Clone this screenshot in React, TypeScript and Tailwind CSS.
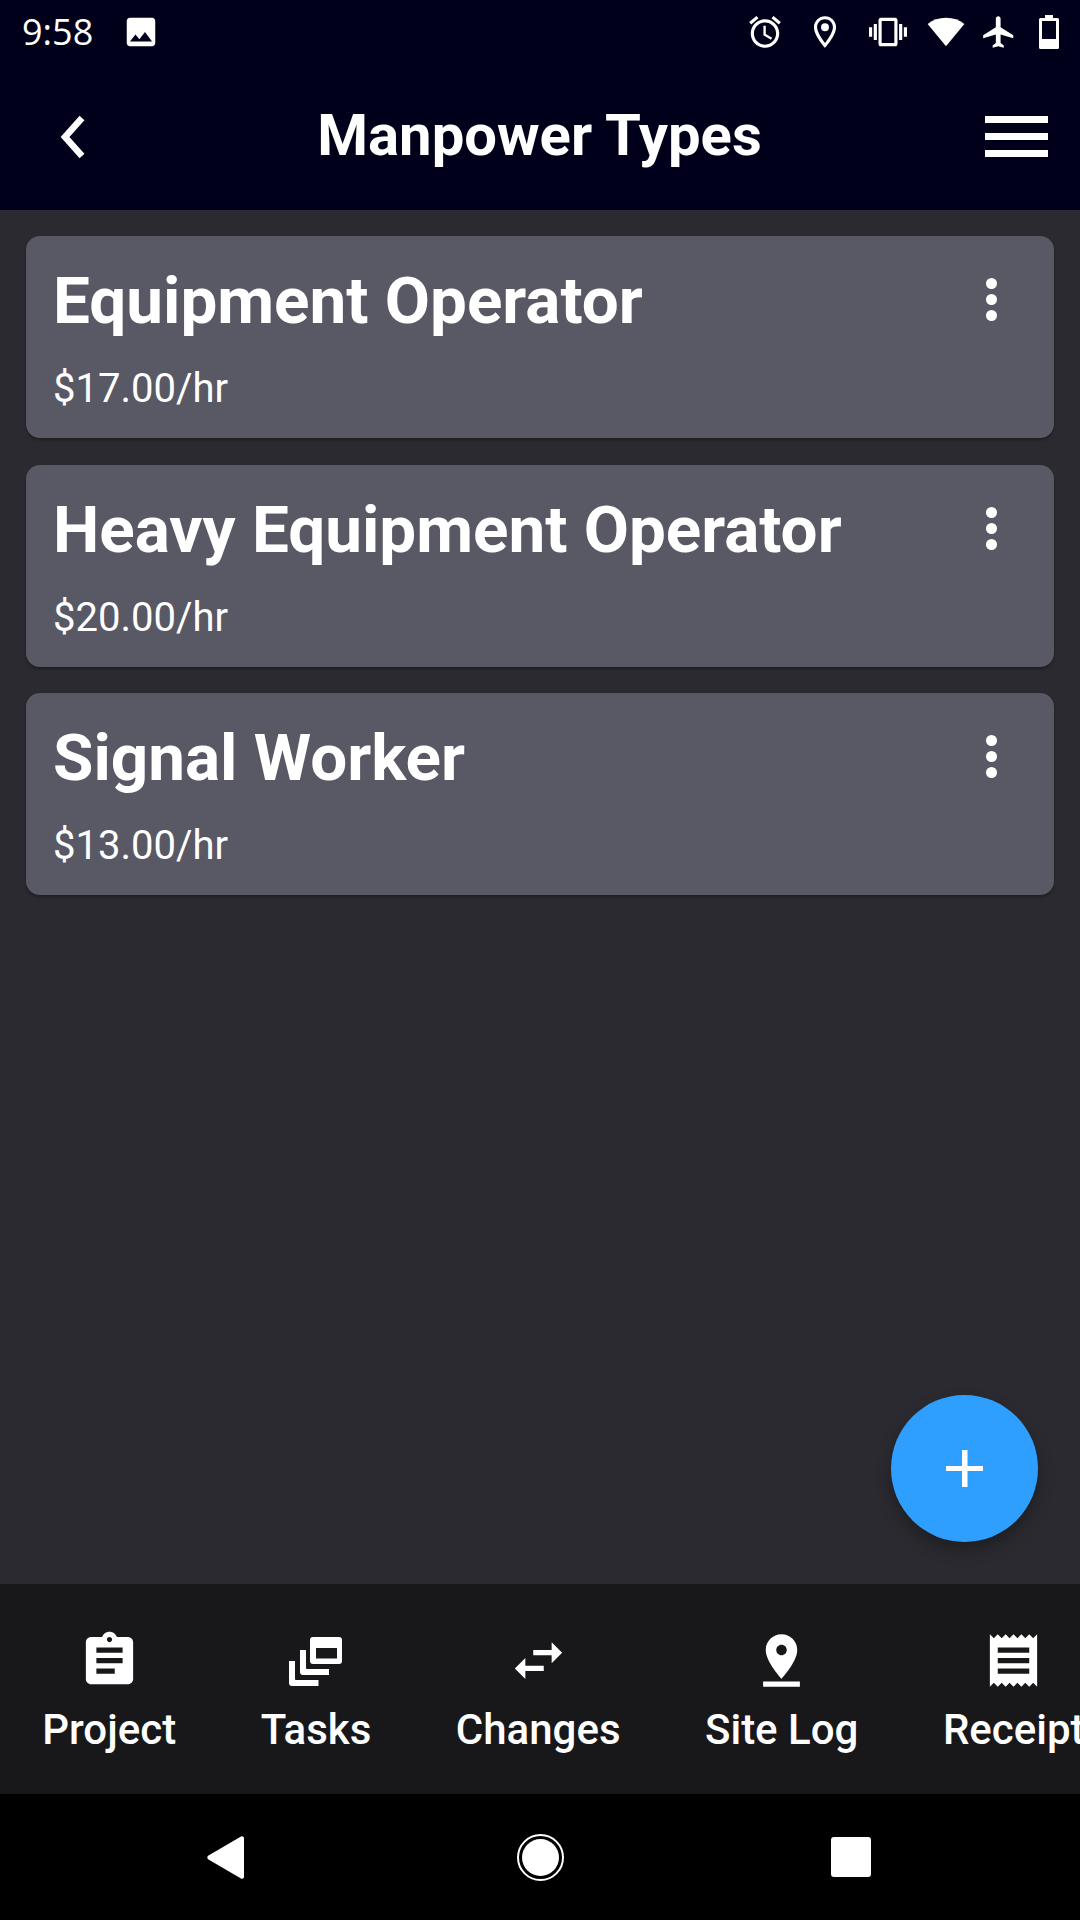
import * as React from "react";

const manpowerTypes = [
  { name: "Equipment Operator", rate: "$17.00/hr" },
  { name: "Heavy Equipment Operator", rate: "$20.00/hr" },
  { name: "Signal Worker", rate: "$13.00/hr" },
];

function Icon({ d, className }: { d: string; className: string }) {
  return (
    <svg viewBox="0 0 24 24" fill="currentColor" className={className}>
      <path d={d} />
    </svg>
  );
}

const ICONS = {
  image:
    "M21 19V5c0-1.1-.9-2-2-2H5c-1.1 0-2 .9-2 2v14c0 1.1.9 2 2 2h14c1.1 0 2-.9 2-2zM8.5 13.5l2.5 3.01L14.5 12l4.5 6H5l3.5-4.5z",
  alarm:
    "M22 5.72l-4.6-3.86-1.29 1.53 4.6 3.86L22 5.72zM7.88 3.39L6.6 1.86 2 5.71l1.29 1.53 4.59-3.85zM12.5 8H11v6l4.75 2.85.75-1.23-4-2.37V8zM12 4c-4.97 0-9 4.03-9 9s4.03 9 9 9 9-4.03 9-9-4.03-9-9-9zm0 16c-3.87 0-7-3.13-7-7s3.13-7 7-7 7 3.13 7 7-3.13 7-7 7z",
  place:
    "M12 2C8.13 2 5 5.13 5 9c0 5.25 7 13 7 13s7-7.75 7-13c0-3.87-3.13-7-7-7zM7 9c0-2.76 2.24-5 5-5s5 2.24 5 5c0 2.88-2.88 7.19-5 9.88C9.92 16.21 7 11.85 7 9z M12 6.500a2.500 2.500 0 1 0 0 5 2.500 2.500 0 0 0 0-5z",
  vibration:
    "M0 15h2V9H0v6zm3 2h2V7H3v10zm19-8v6h2V9h-2zm-3 8h2V7h-2v10zM16.500 3h-9C6.670 3 6 3.670 6 4.500v15c0 .83.67 1.500 1.500 1.500h9c.83 0 1.500-.67 1.500-1.500v-15c0-.83-.67-1.500-1.500-1.500zM16 19H8V5h8v14z",
  wifi: "M12 21L0.400 7C3.600 4.400 7.600 3 12 3s8.400 1.400 11.600 4L12 21z",
  plane:
    "M21 16v-2l-8-5V3.500c0-.83-.67-1.500-1.500-1.500S10 2.670 10 3.500V9l-8 5v2l8-2.500V19l-2 1.500V22l3.500-1 3.500 1v-1.500L13 19v-5.500l8 2.500z",
  project:
    "M19 3h-4.180C14.400 1.840 13.300 1 12 1c-1.300 0-2.400.84-2.820 2H5c-1.100 0-2 .9-2 2v14c0 1.100.9 2 2 2h14c1.100 0 2-.9 2-2V5c0-1.100-.9-2-2-2zm-7 0c.55 0 1 .45 1 1s-.45 1-1 1-1-.45-1-1 .45-1 1-1zm2 14H7v-2h7v2zm3-4H7v-2h10v2zm0-4H7V7h10v2z",
  changes: "M6.990 11L3 15l3.990 4v-3H14v-2H6.990v-3zM21 9l-3.990-4v3H10v2h7.010v3L21 9z",
  siteLog:
    "M18 8c0-3.310-2.690-6-6-6S6 4.690 6 8c0 4.500 6 11 6 11s6-6.500 6-11zm-8 0c0-1.100.9-2 2-2s2 .9 2 2-.89 2-2 2c-1.100 0-2-.9-2-2zM5 20v2h14v-2H5z",
  receipt:
    "M18 17H6v-2h12v2zm0-4H6v-2h12v2zm0-4H6V7h12v2zM3 22l1.500-1.500L6 22l1.500-1.500L9 22l1.500-1.500L12 22l1.500-1.500L15 22l1.500-1.500L18 22l1.500-1.500L21 22V2l-1.500 1.500L18 2l-1.500 1.500L15 2l-1.500 1.500L12 2l-1.500 1.500L9 2 7.500 3.500 6 2 4.500 3.500 3 2v20z",
};

function BatteryIcon() {
  return (
    <svg viewBox="0 0 20 34" fill="currentColor" className="w-[20px] h-[34px]">
      <path
        fillRule="evenodd"
        d="M6 0h8v3h4.500A1.500 1.500 0 0 1 20 4.500v28a1.500 1.500 0 0 1-1.500 1.500h-17A1.500 1.500 0 0 1 0 32.500v-28A1.500 1.500 0 0 1 1.500 3H6zM3 6v18h14V6z"
      />
    </svg>
  );
}

function TasksIcon() {
  return (
    <svg viewBox="0 0 62 62" fill="currentColor" className="w-[62px] h-[62px]">
      <path
        fillRule="evenodd"
        d="M28 7h26a3 3 0 0 1 3 3v21a3 3 0 0 1-3 3H28a3 3 0 0 1-3-3V10a3 3 0 0 1 3-3zm3 11v10.500h21V18z"
      />
      <path d="M15 20h6v18a1 1 0 0 0 1 1h22v6H18a3 3 0 0 1-3-3z" />
      <path d="M4 31h6v18a1 1 0 0 0 1 1h22.500v6H7a3 3 0 0 1-3-3z" />
    </svg>
  );
}

function TabItem({ label, icon }: { label: string; icon: React.ReactNode }) {
  return (
    <div className="flex flex-col items-center shrink-0 px-[42.25px]">
      <div className="h-[63px] flex items-center justify-center">{icon}</div>
      <span className="text-[42px] leading-[47px] font-medium mt-[14px] whitespace-nowrap">
        {label}
      </span>
    </div>
  );
}

export default function App() {
  return (
    <div className="relative w-[1080px] h-[1920px] flex flex-col overflow-hidden bg-[#2a2a30] text-white font-['Roboto',sans-serif]">
      <header className="h-[210px] shrink-0 bg-[#00001a] flex flex-col">
        <div className="h-[63px] flex items-center pl-[22px]">
          <span className="text-[36px] leading-none w-[100px] font-medium font-['Open_Sans',sans-serif]">
            9:58
          </span>
          <Icon d={ICONS.image} className="w-[38px] h-[38px]" />
          <div className="flex-1" />
          <Icon d={ICONS.alarm} className="w-[38px] h-[38px] mr-[22px]" />
          <Icon d={ICONS.place} className="w-[38px] h-[38px] mr-[25px]" />
          <Icon d={ICONS.vibration} className="w-[38px] h-[38px] mr-[19px]" />
          <Icon d={ICONS.wifi} className="w-[40px] h-[38px] mr-[14px]" />
          <Icon d={ICONS.plane} className="w-[38px] h-[38px] mr-[21px]" />
          <BatteryIcon />
          <div className="w-[21px]" />
        </div>
        <div className="flex-1 flex items-center justify-between pl-[54px] pr-[32px]">
          <svg
            viewBox="0 0 40 50"
            className="w-[40px] h-[50px]"
            fill="none"
            stroke="currentColor"
            strokeWidth="6.500"
          >
            <path d="M28 6L11 25l17 19" />
          </svg>
          <h1 className="text-[58px] leading-none font-bold -mt-[3px]">Manpower Types</h1>
          <div className="w-[63px] flex flex-col gap-[10px]">
            <div className="h-[7px] bg-white" />
            <div className="h-[7px] bg-white" />
            <div className="h-[7px] bg-white" />
          </div>
        </div>
      </header>

      <main className="flex-1 flex flex-col gap-[26.5px] pt-[26px] px-[26px]">
        {manpowerTypes.map((t) => (
          <div
            key={t.name}
            className="h-[202px] rounded-[14px] bg-[#595965] shadow-[0_2px_3px_rgba(0,0,0,0.3)] flex justify-between pl-[27px] pr-[57px]"
          >
            <div className="flex flex-col">
              <h2 className="text-[65.6px] leading-[77px] font-bold mt-[26px]">{t.name}</h2>
              <p className="text-[40px] leading-[47px] mt-[26px]">{t.rate}</p>
            </div>
            <div className="flex flex-col gap-[5px] mt-[42px]">
              <span className="w-[11px] h-[11px] rounded-full bg-white" />
              <span className="w-[11px] h-[11px] rounded-full bg-white" />
              <span className="w-[11px] h-[11px] rounded-full bg-white" />
            </div>
          </div>
        ))}
      </main>

      <button className="absolute left-[891px] top-[1395px] w-[147px] h-[147px] rounded-full bg-[#2f9fff] shadow-[0_8px_16px_rgba(0,0,0,0.3)] flex items-center justify-center">
        <svg viewBox="0 0 37 37" className="w-[37px] h-[37px]" fill="currentColor">
          <path d="M16 0h5.500v16H37v5H21.500v16H16V21H0v-5h16z" />
        </svg>
      </button>

      <nav className="h-[210px] shrink-0 bg-[#18181b] flex overflow-hidden pt-[45px]">
        <TabItem label="Project" icon={<Icon d={ICONS.project} className="w-[63px] h-[63px]" />} />
        <TabItem label="Tasks" icon={<TasksIcon />} />
        <TabItem label="Changes" icon={<Icon d={ICONS.changes} className="w-[63px] h-[63px]" />} />
        <TabItem label="Site Log" icon={<Icon d={ICONS.siteLog} className="w-[63px] h-[63px]" />} />
        <TabItem label="Receipt" icon={<Icon d={ICONS.receipt} className="w-[63px] h-[63px]" />} />
      </nav>

      <footer className="h-[126px] shrink-0 bg-black flex items-center pl-[207px]">
        <svg viewBox="0 0 37 43" className="w-[37px] h-[43px]" fill="currentColor">
          <path d="M34 .6a2 2 0 0 1 3 1.700v38.400a2 2 0 0 1-3 1.700L1.500 23.500a2.300 2.300 0 0 1 0-4z" />
        </svg>
        <div className="ml-[272.5px] w-[47px] h-[47px] rounded-full border-[2.500px] border-white p-[3px]">
          <div className="w-full h-full rounded-full bg-white" />
        </div>
        <div className="ml-[267.5px] w-[40px] h-[40px] rounded-[3px] bg-white" />
      </footer>
    </div>
  );
}
